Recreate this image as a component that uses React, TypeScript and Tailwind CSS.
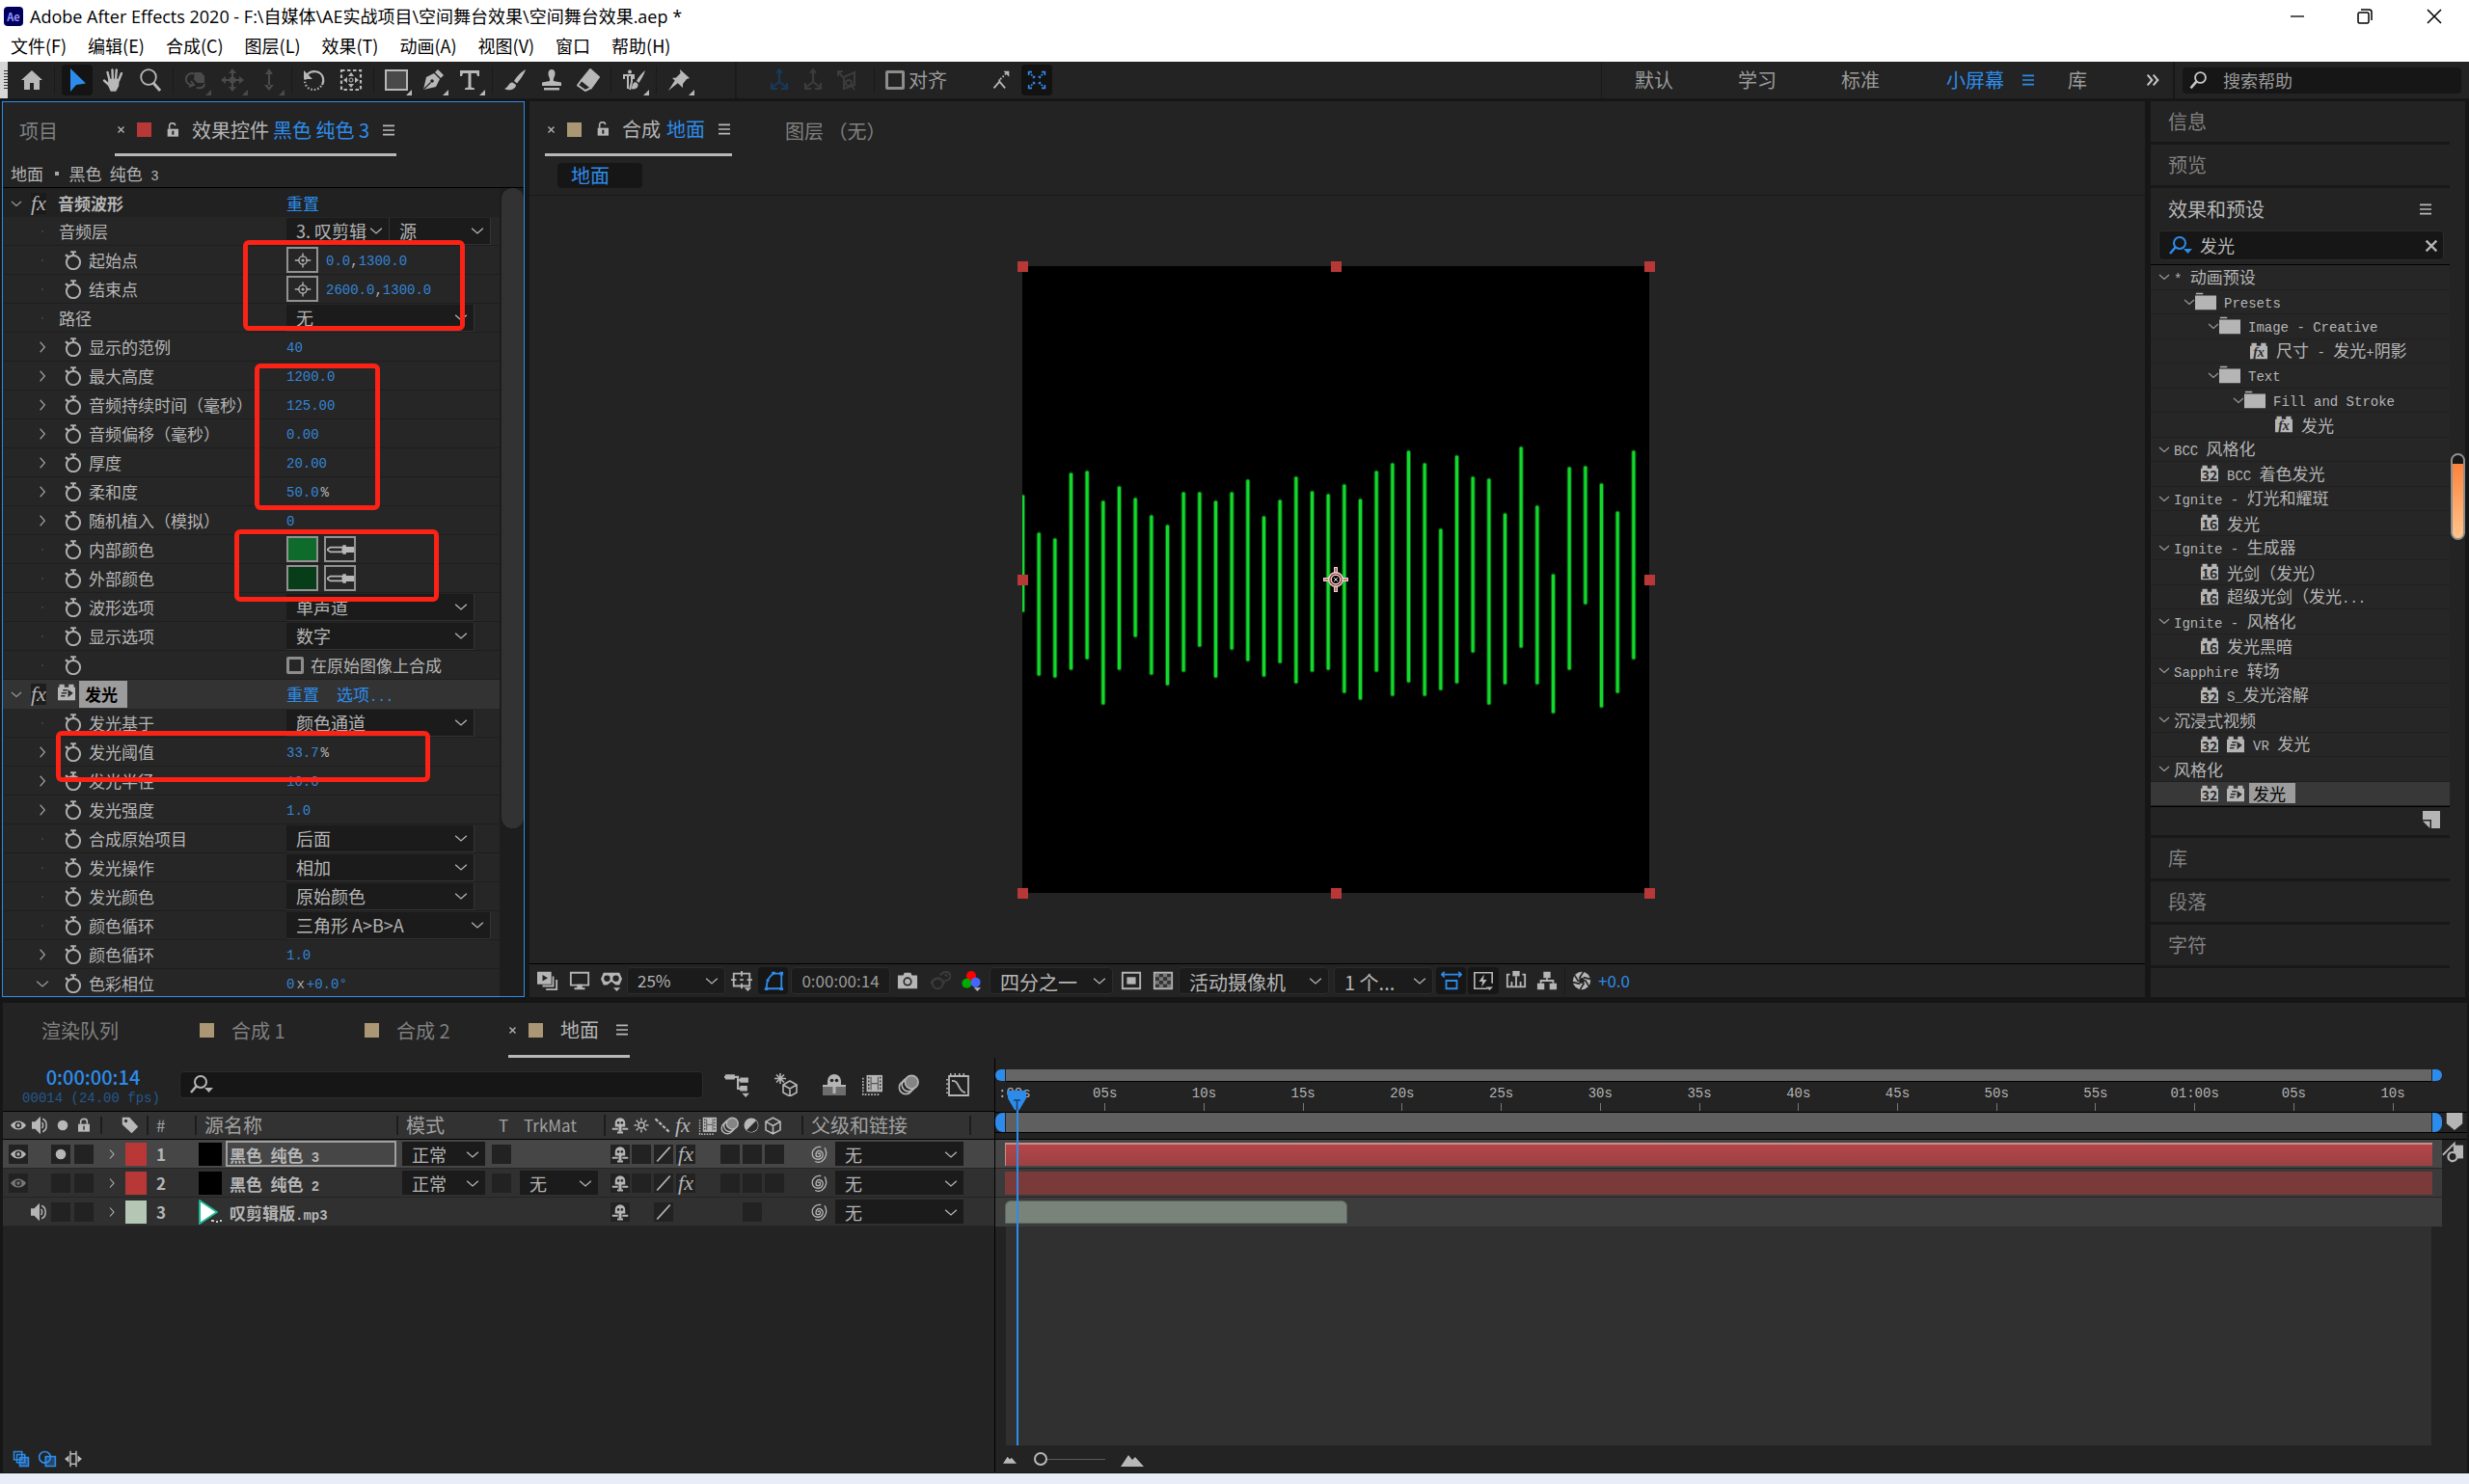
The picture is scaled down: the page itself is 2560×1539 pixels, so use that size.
import type { ReactNode } from 'react';
import clsx from 'clsx';

const icons: Record<string, ReactNode> = {
  home: <path fill="currentColor" d="M12 2 1 12h3v10h6v-7h4v7h6V12h3z" />,
  arrow: <path fill="currentColor" d="M5 0v24l6-7L21 15.500z" />,
  hand: (
    <g fill="none" stroke="currentColor" strokeWidth="2.400" strokeLinecap="round">
      <path d="M7.500 12 5.500 4M10.800 11 10.500 1.500M14 11l.8-9.500M17 12.500 20 5M7 17l-5-4.500" />
      <path fill="currentColor" d="M7.500 12h9l-.5 6-2.500 4.500h-4L7 17z" />
    </g>
  ),
  zoom: (
    <g fill="none" stroke="currentColor" strokeWidth="1.800">
      <circle cx="10" cy="9" r="7.800" />
      <path strokeWidth="3" d="m15 15 7 8" />
    </g>
  ),
  orbit: (
    <g fill="none" stroke="currentColor" strokeWidth="2">
      <path d="M9 17a6 6 0 1 1 2-11" />
      <path fill="currentColor" d="M12 5h5l3 3v6h-6l-3-3z" />
      <path d="m7 13 3 4-5 2M13 20c5 1 8-1 8-4" />
    </g>
  ),
  move: (
    <g fill="currentColor">
      <path d="M11 4h2v16h-2zM4 11h16v2H4z" />
      <path d="m12 0 4 5H8zM12 24l4-5H8zM0 12l5-4v8zM24 12l-5-4v8z" />
      <circle cx="12" cy="12" r="3.500" />
    </g>
  ),
  dolly: (
    <g fill="currentColor">
      <path d="M11 4h2v15h-2zM12 0l4 6H8zM12 23l5-6H7z" />
    </g>
  ),
  rotate: (
    <g fill="none" stroke="currentColor" strokeWidth="2.200">
      <path d="M4 7c5-6 15-5 17 3 .8 3 0 5-1 7" />
      <path strokeDasharray="1.500 2" d="M19 18c-4 6-13 5-16-1-1-2-1-4-.5-6" />
      <path fill="currentColor" stroke="none" d="M1 2v9h9z" />
    </g>
  ),
  panBehind: (
    <g>
      <rect x="2" y="2" width="20" height="20" fill="none" stroke="currentColor" strokeWidth="2.200" strokeDasharray="3.500 2.500" />
      <path fill="currentColor" d="m12 4 3 4H9zM12 20l3-4H9zM4 12l4-3v6zM20 12l-4-3v6z" />
      <circle cx="12" cy="12" r="2" fill="none" stroke="currentColor" />
    </g>
  ),
  rect: <rect x="1" y="2" width="22" height="20" fill="#494949" stroke="currentColor" strokeWidth="2" />,
  pen: (
    <g fill="currentColor">
      <path d="M2 22 5 9l8-4 6 6-4 8z" />
      <path d="m14 4 3-3 6 6-3 3z" />
      <path stroke="#232323" strokeWidth="1.200" d="m2.500 21.500 7-7" />
      <circle cx="11" cy="13" r="1.800" fill="#232323" />
    </g>
  ),
  type: <path fill="currentColor" d="M2 2h20v6h-2l-1-3h-5.500v14.500L17 20.500V22H7v-1.500l3.500-1V5H5L4 8H2z" />,
  brush: (
    <g fill="currentColor">
      <path d="M23 1c-4 2-10 8-12 12l3 2.500C17 12 22 5 23 1z" />
      <path d="M9.500 14.500c-4-.5-4 5-8.500 6.500 5 3 12 .5 12-4z" />
    </g>
  ),
  stamp: (
    <g fill="currentColor">
      <path d="M8.500 5.500a3.500 4.500 0 0 1 7 0c0 3-2 4-1.500 7.500L22 14.500V18H2v-3.500L10 13c.5-3.500-1.500-4.500-1.500-7.500z" />
      <path d="M4 20h16v2.500H4z" />
    </g>
  ),
  eraser: (
    <g fill="none" stroke="currentColor" strokeWidth="2">
      <path fill="currentColor" d="M14 1 23 9 15 20 5 12z" />
      <path d="m5 12-4 5.500L9 23l6-3" />
    </g>
  ),
  roto: (
    <g fill="none" stroke="currentColor" strokeWidth="2">
      <circle cx="8" cy="3.500" r="2" fill="currentColor" stroke="none" />
      <path d="M2 11V7h10v4M6 8v13M10 8v6l-2 8" />
      <path fill="currentColor" stroke="none" d="M24 2c-4 3-7 7-9 11l2.500 2C20 11 23 6 24 2zM14 14c-4 1-3 5-5 7 5 1.500 8-1 7.500-5z" />
    </g>
  ),
  pin: (
    <g fill="currentColor">
      <path d="m13 1 10 9-3 1-4 5 0 4L5 10l4-.5L13.500 5z" />
      <path d="M8 12 1 23l10-8z" />
    </g>
  ),
  axis: (
    <g fill="none" stroke="currentColor" strokeWidth="2">
      <path d="M12 14V3M12 14l-8 6M12 14l8 6M9 5l3-4 3 4M4 15v6h6M20 15v6h-6" />
    </g>
  ),
  axisBox: (
    <g fill="none" stroke="currentColor" strokeWidth="2">
      <path d="M3 3l5 6M3 8V3h5M20 4v13L9 21V9z" />
      <circle cx="14" cy="15" r="3" />
      <path d="m16 17 4 5" />
    </g>
  ),
  snap: (
    <g fill="none" stroke="currentColor" strokeWidth="2.200">
      <path d="m3 22 7-8 7 8M10 14v-3" />
      <path strokeDasharray="2 2" d="m11 11 7-7" />
      <path fill="currentColor" stroke="none" d="M15 1h7v7z" />
    </g>
  ),
  snapBox: (
    <g fill="none" stroke="currentColor" strokeWidth="2">
      <path d="M2 6V2h4M18 2h4v4M22 18v4h-4M6 22H2v-4" />
      <path d="M8 10V8h2M14 8h2v2M16 14v2h-2M10 16H8v-2M5 5l1.500 1.500M19 5l-1.500 1.500M5 19l1.500-1.500M19 19l-1.500-1.500" />
    </g>
  ),
  menu: <path stroke="currentColor" strokeWidth="2.400" d="M3 5h18M3 12h18M3 19h18" />,
  more: <path fill="none" stroke="currentColor" strokeWidth="3" d="m4 4 7 8-7 8M13 4l7 8-7 8" />,
  search: (
    <g fill="none" stroke="currentColor" strokeWidth="2.200">
      <circle cx="15" cy="9" r="6.500" />
      <path strokeWidth="3" d="m10 14-7 8" />
    </g>
  ),
  searchDrop: (
    <g fill="none" stroke="currentColor" strokeWidth="2">
      <circle cx="11" cy="9" r="6" />
      <path strokeWidth="2.500" d="m7 13-6 7" />
      <path fill="currentColor" stroke="none" d="M15 15h9l-4.500 5z" />
    </g>
  ),
  lock: (
    <g fill="currentColor">
      <path d="M3 10h18v12H3z" />
      <path fill="none" stroke="currentColor" strokeWidth="2.400" d="M7 10V6a5 4 0 0 1 10 0v4" />
      <path fill="#232323" d="M11 13h2v6h-2z" />
    </g>
  ),
  unlock: (
    <g fill="currentColor">
      <path d="M4 10h17v12H4z" />
      <path fill="none" stroke="currentColor" strokeWidth="2.400" d="M7 10V5a4.500 4 0 0 1 9 0" />
      <path fill="#232323" d="M11 13h3v6h-3z" />
    </g>
  ),
  close: <path stroke="currentColor" strokeWidth="3.500" d="m4 4 16 16M20 4 4 20" />,
  right: <path fill="none" stroke="currentColor" strokeWidth="2.200" d="m8 3 8 9-8 9" />,
  down: <path fill="none" stroke="currentColor" strokeWidth="2.200" d="m2 8 10 9 10-9" />,
  watch: (
    <g fill="none" stroke="currentColor" strokeWidth="2.400">
      <circle cx="12" cy="14.500" r="8.500" />
      <path d="M8.500 1.500h7M12 2v4" />
      <path strokeWidth="3" d="m2.500 5 3.500 3" />
    </g>
  ),
  target: (
    <g fill="none" stroke="currentColor" strokeWidth="1.800">
      <circle cx="12" cy="12" r="5.500" />
      <circle cx="12" cy="12" r="1.200" fill="currentColor" />
      <path d="M12 2v5M12 17v5M1 12h6M17 12h6" />
    </g>
  ),
  dropper: (
    <g fill="none" stroke="currentColor" strokeWidth="1.400">
      <path d="m0 12 3-2h11v4H3z" />
      <path fill="currentColor" stroke="none" d="M14 8h3v1.500h7v5h-7V16h-3z" />
    </g>
  ),
  brickLines: (
    <g>
      <path fill="currentColor" d="M0 5h2V1h7v4h6V1h7v4h2v18H0z" />
      <path stroke="#2b2b2b" strokeWidth="2" d="M7 9h6M5 13h7M4 17h6" />
      <path fill="#2b2b2b" d="m14 8 7 5-7 6z" />
    </g>
  ),
  brick: <path fill="currentColor" d="M0 5h2V1h7v4h6V1h7v4h2v18H0z" />,
  folder: <path fill="currentColor" d="M1 2h8v1.500H1zM0 5h24v16H0z" />,
  eye: (
    <g>
      <path fill="currentColor" d="M0 12C6 3 18 3 24 12 18 21 6 21 0 12z" />
      <circle cx="12" cy="12" r="5" fill="#2b2b2b" />
      <circle cx="12" cy="12" r="2.500" fill="currentColor" />
    </g>
  ),
  speaker: (
    <g fill="none" stroke="currentColor" strokeWidth="2">
      <path fill="currentColor" d="M1 8h4l6-6v20l-6-6H1z" />
      <path d="M14 8c2 2 2 6 0 8M15 3c7 3 7 15 0 18" />
    </g>
  ),
  dot: <circle cx="12" cy="12" r="8" fill="currentColor" />,
  tag: (
    <g>
      <path fill="currentColor" d="M1 1h10l12 13-9 9L1 11z" />
      <circle cx="6" cy="6" r="2.200" fill="#303030" />
    </g>
  ),
  shy: (
    <g>
      <path fill="currentColor" d="M5 9a7 7.500 0 0 1 14 0v5h-5v7h-4v-7H5z" />
      <path stroke="currentColor" strokeWidth="2.400" d="M1 17h8M15 17h8M8 22h8" />
      <circle cx="9.500" cy="8.500" r="1.800" fill="#2b2b2b" />
      <circle cx="14.500" cy="8.500" r="1.800" fill="#2b2b2b" />
    </g>
  ),
  shyBar: (
    <g>
      <path fill="#6d6d6d" d="M0 14h24v9H0z" />
      <path fill="currentColor" d="M5 8a7 7 0 0 1 14 0v4h5v2H13.500v7h-3v-7H0v-2h5z" />
      <circle cx="9.500" cy="7.500" r="1.800" fill="#232323" />
      <circle cx="14.500" cy="7.500" r="1.800" fill="#232323" />
    </g>
  ),
  sun: (
    <g fill="none" stroke="currentColor" strokeWidth="2">
      <circle cx="12" cy="12" r="4" />
      <path d="M12 2v4M12 18v4M2 12h4M18 12h4M5 5l3 3M16 16l3 3M19 5l-3 3M8 16l-3 3" />
    </g>
  ),
  slashDots: <path stroke="currentColor" strokeWidth="3" strokeDasharray="5 2" d="m2 3 19 18" />,
  slash: <path stroke="currentColor" strokeWidth="2.400" d="M3 22 21 2" />,
  film: (
    <g>
      <path fill="currentColor" d="M6 1h18v19H6z" />
      <path fill="none" stroke="currentColor" strokeWidth="1.800" strokeDasharray="2 1.500" d="M2 4v19h18" />
      <path stroke="#2b2b2b" strokeWidth="1.500" strokeDasharray="2 2" d="M8.500 3v16M21.500 3v16" />
      <path fill="none" stroke="#555" strokeWidth="1.200" d="M11 3v15M19 3v15M11 10.500h8" />
    </g>
  ),
  blur: (
    <g fill="none" stroke="currentColor" strokeWidth="1.800">
      <circle cx="9" cy="15" r="7.500" />
      <circle cx="12" cy="12" r="7.500" />
      <circle cx="15.500" cy="9" r="7.500" fill="#858585" />
    </g>
  ),
  adjust: (
    <g>
      <circle cx="12" cy="12" r="10" fill="currentColor" />
      <path fill="#2b2b2b" d="M18.500 5.500A9 9 0 0 1 5.500 18.500z" />
    </g>
  ),
  cube: <path fill="none" stroke="currentColor" strokeWidth="2" d="m12 1.500 9.500 5v11L12 22.500l-9.500-5v-11zM2.500 6.500 12 12l9.500-5.500M12 12v10" />,
  whip: (
    <g fill="none" stroke="currentColor" strokeWidth="1.800">
      <path d="M11 12c0-2 3-2 3 .5 0 4-6 4-6 0C8 8 12 6 15 8c5 4 2 11-4 11C2 19 0 8 8 3c2-1 5-1.500 7-1" />
      <path d="M20 3c4 7 2 14-4 19-3 1.500-6 1.500-9 0" />
    </g>
  ),
  flow: (
    <g fill="none" stroke="currentColor" strokeWidth="2">
      <path fill="currentColor" d="M2 3h7v3H2zM16 6h6v3h-6zM16 14h5v3h-5z" />
      <path d="M0 4.500h13v11h4M13 7.500h3" />
      <path fill="currentColor" stroke="none" d="M17 20h7l-3.500 4z" />
    </g>
  ),
  draft3d: (
    <g fill="none" stroke="currentColor" strokeWidth="1.600">
      <path d="M6 0v11M0 5.500h12M2 1.500l8 8M10 1.500l-8 8" />
      <path d="m16 8 7 4v8l-7 4-7-4v-8zM9 12l7 4 7-4M16 16v8" />
    </g>
  ),
  graph: (
    <g fill="none" stroke="currentColor" strokeWidth="1.800">
      <path d="M3 3h20v20H3zM6 8c8-1 6 11 14 12" />
      <path strokeDasharray="1.500 3" d="M4 1h18M1 6v16" />
    </g>
  ),
  preview: (
    <g fill="none" stroke="currentColor" strokeWidth="2">
      <path fill="currentColor" d="M1 3h14v12H1z" />
      <path d="M18 7v11H6M22 11v11H10" />
      <path fill="#232323" stroke="none" d="m6 5.500 6 3.500-6 3.500z" />
    </g>
  ),
  monitor: (
    <g fill="none" stroke="currentColor" strokeWidth="2">
      <path d="M2 3h20v14H2z" />
      <path fill="currentColor" d="M10 17h4v4h-4zM6 21h12" />
    </g>
  ),
  goggles: (
    <g>
      <path fill="currentColor" d="M3 3h18l3 7-3 7h-4l-5-4-5 4H3l-3-7z" />
      <circle cx="7" cy="9.500" r="3.500" fill="#232323" />
      <circle cx="17" cy="9.500" r="3.500" fill="#232323" />
      <path fill="currentColor" d="M14 20h8l-4 4z" />
    </g>
  ),
  safe: (
    <g fill="none" stroke="currentColor" strokeWidth="2">
      <path d="M3 4h18v14H3zM12 1v6M12 15v6M0 11h6M18 11h6M10 11h4" />
      <path fill="currentColor" stroke="none" d="M15 20h8l-4 4z" />
    </g>
  ),
  mask: (
    <g fill="none" stroke="currentColor" strokeWidth="2">
      <path d="M4 21h17V4h-9C7 7 4 13 4 21z" />
      <path fill="currentColor" d="M2 20h4v3H2zM19 20h4v3h-4zM19 2h4v4h-4zM10 2h4v3h-4zM4 10h3v3H4z" stroke="none" />
    </g>
  ),
  camera: (
    <g>
      <path fill="currentColor" d="M1 6h6l1.500-3h7L17 6h6v15H1z" />
      <circle cx="12" cy="13" r="5" fill="#232323" />
      <circle cx="12" cy="13" r="3.200" fill="currentColor" />
    </g>
  ),
  ghost: (
    <g fill="none" stroke="currentColor" strokeWidth="2.200">
      <circle cx="9" cy="15" r="6" />
      <path d="M1 15c5-7 11-7 16 0M12 6c3-5 9-5 11-1s-2 7-6 7M17 5l3 2" />
    </g>
  ),
  rgb: (
    <g>
      <circle cx="12" cy="6.500" r="5.500" fill="#f00" />
      <circle cx="7" cy="15" r="5.500" fill="#0a0" />
      <circle cx="17" cy="14" r="5.500" fill="#46f" />
      <path fill="#b5b5b5" d="M15 20h8l-4 4z" />
    </g>
  ),
  region: (
    <g>
      <path fill="none" stroke="currentColor" strokeWidth="2" d="M2 3h20v18H2z" />
      <path fill="currentColor" d="M7 8h10v8H7z" />
    </g>
  ),
  checker: (
    <g>
      <path fill="#333" stroke="currentColor" strokeWidth="2" d="M2 3h20v18H2z" />
      <path fill="#7a7a7a" d="M3 4h4.500v4H3zM12 4h4.500v4H12zM7.500 8H12v4H7.500zM16.500 8H21v4h-4.500zM3 12h4.500v4H3zM12 12h4.500v4H12zM7.500 16H12v4H7.500zM16.500 16H21v4h-4.500z" />
    </g>
  ),
  pixelAspect: (
    <g fill="none" stroke="currentColor" strokeWidth="2">
      <path d="M6 12h12v9H6zM1 5h22M4 2 1 5l3 3M20 2l3 3-3 3" />
    </g>
  ),
  fast: (
    <g fill="none" stroke="currentColor" strokeWidth="1.800">
      <path d="M17 21H2V3h20v12" />
      <path fill="currentColor" stroke="none" d="m13 5-6 8h4l-1 6 6-8h-4zM15 19h8l-4 4z" />
    </g>
  ),
  timelineIcon: (
    <g fill="none" stroke="currentColor" strokeWidth="2">
      <path d="M5 5H2v14h20V5h-3M7 13v5M12 7v11M17 13v5" />
      <path fill="currentColor" stroke="none" d="M8 1h8v6H8z" />
    </g>
  ),
  flowchart: (
    <g fill="currentColor">
      <path d="M8 2h8v7H8zM1 15h8v7H1zM15 15h8v7h-8z" />
      <path fill="none" stroke="currentColor" strokeWidth="2" d="M12 9v3M5 15v-3h14v3" />
    </g>
  ),
  aperture: (
    <g>
      <circle cx="12" cy="12" r="11" fill="currentColor" />
      <path fill="none" stroke="#232323" strokeWidth="2" d="M14 1 9 9M23 10l-9-2M21 19l-5-8M10 23l5-8M1 14l9 2M3 5l5 8" />
      <circle cx="12" cy="12" r="3.500" fill="#232323" />
    </g>
  ),
  newBin: (
    <g>
      <path fill="currentColor" d="M0 0h24v24H12V12H0z" />
      <path fill="currentColor" d="M0 14h10v10z" />
    </g>
  ),
  switches: (
    <g fill="none" stroke="currentColor" strokeWidth="2">
      <path d="M2 2h11v11H2zM6 6h11v11H6z" />
      <path fill="currentColor" fillOpacity=".5" d="M10 10h12v12H10z" />
    </g>
  ),
  modes: (
    <g fill="none" stroke="currentColor" strokeWidth="2">
      <circle cx="9" cy="10" r="7" />
      <path fill="currentColor" fillOpacity=".35" d="M10 9h12v12H10z" />
    </g>
  ),
  stretch: (
    <g fill="none" stroke="currentColor" strokeWidth="2">
      <path d="M8 1v22M16 1v22M8 5h8M8 19h8" />
      <path fill="currentColor" stroke="none" d="m0 12 6-5v10zM24 12l-6-5v10z" />
    </g>
  ),
  mountain: <path fill="currentColor" d="m0 20 8-12 4 5 3-3 9 10z" />,
  shield: <path fill="currentColor" d="M1 0h22v15l-11 9L1 15z" />,
  compButton: (
    <g>
      <path fill="currentColor" d="M13 4h11v15H13z" />
      <path fill="none" stroke="currentColor" strokeWidth="2" d="M1 15 14 2v10" />
      <circle cx="12" cy="17" r="5" fill="#232323" stroke="currentColor" strokeWidth="2.400" />
    </g>
  ),
};

function Icon({ name, className = 'size-6' }: { name: string; className?: string }) {
  return (
    <svg viewBox="0 0 24 24" className={clsx('shrink-0', className)} aria-hidden="true">
      {icons[name]}
    </svg>
  );
}

// Latin runs are set in the narrow monospaced face, Chinese runs in the wider one
function Mixed({ text }: { text: string }) {
  const runs = text.match(/[\x20-\x7e°]+|[^\x20-\x7e°]+/g) ?? [];
  return (
    <span className="whitespace-pre">
      {runs.map((run, i) =>
        /^[\x20-\x7e°]/.test(run) ? (
          <span key={i} className="font-['Liberation_Mono',monospace] text-[14px]">{run}</span>
        ) : (
          <span key={i} className="text-[17px]">{run}</span>
        ),
      )}
    </span>
  );
}

function Select({ label, value, className }: { label: string; value: string; className?: string }) {
  return (
    <span className={clsx('relative flex shrink-0 items-center bg-[#1b1b1b]', className)}>
      <select aria-label={label} className="h-full w-full appearance-none bg-transparent pl-2.5 outline-none">
        <option>{value}</option>
      </select>
      <Icon name="down" className="pointer-events-none absolute right-1.5 size-3.5" />
    </span>
  );
}

function Fx({ className }: { className?: string }) {
  return <span className={clsx("font-['Liberation_Serif',serif] text-[22px] leading-none italic", className)}>fx</span>;
}

function TabMenu() {
  return (
    <button aria-label="面板菜单" className="text-[#b8b8b8]">
      <Icon name="menu" className="size-4" />
    </button>
  );
}

const menus = ['文件(F)', '编辑(E)', '合成(C)', '图层(L)', '效果(T)', '动画(A)', '视图(V)', '窗口', '帮助(H)'];

function TitleBar() {
  return (
    <header className="flex h-16 flex-col bg-white text-black">
      <div className="flex h-[34px] items-center pl-1">
        <span className="flex size-5 items-center justify-center rounded-sm bg-[#00005b] text-[11px] font-bold text-[#9999ff]">Ae</span>
        <h1 className="ml-[7px] font-['Open_Sans','Noto_Sans_CJK_SC',sans-serif] text-[18px]">
          Adobe After Effects 2020 - F:\自媒体\AE实战项目\空间舞台效果\空间舞台效果.aep *
        </h1>
        <div className="ml-auto flex">
          <button aria-label="最小化" className="flex h-8 w-[70px] items-center justify-center">
            <svg viewBox="0 0 16 16" className="size-4"><path stroke="#000" strokeWidth="1.300" d="M1 8h14" /></svg>
          </button>
          <button aria-label="还原" className="flex h-8 w-[70px] items-center justify-center">
            <svg viewBox="0 0 16 16" className="size-4" fill="none" stroke="#000" strokeWidth="1.500">
              <rect x="1" y="4" width="11" height="11" rx="1.500" />
              <path d="M4 1h8.500q2.500 0 2.500 2.500V12" />
            </svg>
          </button>
          <button aria-label="关闭" className="flex h-8 w-[73px] items-center justify-center">
            <svg viewBox="0 0 16 16" className="size-4"><path stroke="#000" strokeWidth="1.500" d="m1 1 14 14M15 1 1 15" /></svg>
          </button>
        </div>
      </div>
      <nav className="flex h-[30px] items-start gap-[22px] pl-[11px] text-[18px]">
        {menus.map((m) => <button key={m}>{m}</button>)}
      </nav>
    </header>
  );
}

type ToolDef = { icon: string; more?: boolean; state?: 'active' | 'off' };

const toolGroups: ToolDef[][] = [
  [{ icon: 'home' }],
  [{ icon: 'arrow', state: 'active' }, { icon: 'hand' }, { icon: 'zoom' }],
  [{ icon: 'orbit', state: 'off', more: true }, { icon: 'move', state: 'off', more: true }, { icon: 'dolly', state: 'off', more: true }],
  [{ icon: 'rotate' }, { icon: 'panBehind' }],
  [{ icon: 'rect', more: true }, { icon: 'pen', more: true }, { icon: 'type', more: true }],
  [{ icon: 'brush' }, { icon: 'stamp' }, { icon: 'eraser' }],
  [{ icon: 'roto', more: true }],
  [{ icon: 'pin', more: true }],
];

function Tool({ icon, more, state }: ToolDef) {
  return (
    <button
      aria-label={icon}
      className={clsx('relative mx-[3px] flex h-8 w-8 items-center justify-center rounded-sm', {
        'bg-[#141414] text-[#2d8ceb]': state === 'active',
        'text-[#4a4a4a]': state === 'off',
      })}
    >
      <Icon name={icon} />
      {more && (
        <svg viewBox="0 0 6 6" className="absolute right-0 bottom-0 size-1.5"><path fill="currentColor" d="M6 0v6H0z" /></svg>
      )}
    </button>
  );
}

function Toolbar() {
  return (
    <div className="flex h-[38px] items-center bg-[#232323] text-[#b8b8b8]">
      <span className="mr-1.5 flex h-full w-2 items-center justify-end bg-[#d6d6d6]">
        <svg viewBox="0 0 4 20" className="h-5 w-1"><path stroke="#333" strokeWidth="4" strokeDasharray="1 2" d="M2 0v20" /></svg>
      </span>
      {toolGroups.map((group, i) => (
        <div key={i} className="flex items-center">
          {i > 0 && <span className="mx-1 h-7 w-px bg-[#1a1a1a]" />}
          {group.map((t) => <Tool key={t.icon} {...t} />)}
        </div>
      ))}
      <span className="ml-[39px] h-full w-0.5 bg-[#1a1a1a]" />
      <div className="ml-[26px] flex text-[#3c3c3c]">
        <button aria-label="本地轴" className="flex w-[35px] justify-center text-[#173a5c]"><Icon name="axis" /></button>
        <button aria-label="世界轴" className="flex w-[35px] justify-center"><Icon name="axis" /></button>
        <button aria-label="视图轴" className="flex w-[35px] justify-center"><Icon name="axisBox" /></button>
      </div>
      <span className="mx-[11px] h-7 w-px bg-[#1a1a1a]" />
      <label className="flex items-center gap-1 text-[20px] text-[#9b9b9b]">
        <input type="checkbox" className="size-5 appearance-none rounded-xs border-[3px] border-[#8c8c8c]" />
        对齐
      </label>
      <button aria-label="对齐边缘" className="ml-10 flex w-8 justify-center"><Icon name="snap" className="size-5" /></button>
      <button aria-label="对齐特征" className="ml-[5px] flex h-8 w-8 items-center justify-center rounded-sm bg-[#121212] text-[#2d8ceb]">
        <Icon name="snapBox" className="size-5" />
      </button>

      <div className="ml-auto flex h-full items-center text-[20px] text-[#9b9b9b]">
        <span className="mr-[34px] h-full w-px bg-[#181818]" />
        <button>默认</button>
        <button className="ml-[67px]">学习</button>
        <button className="ml-[67px]">标准</button>
        <button className="ml-[69px] text-[#2d8ceb]">小屏幕</button>
        <button aria-label="工作区菜单" className="ml-[17px] text-[#2d8ceb]"><Icon name="menu" className="size-4" /></button>
        <button className="ml-[33px]">库</button>
        <button aria-label="更多工作区" className="ml-[60px] text-[#c8c8c8]"><Icon name="more" className="size-4" /></button>
        <span className="mr-2 ml-[13px] h-full w-0.5 bg-[#181818]" />
        <label className="mr-2 flex h-[27px] w-[289px] items-center rounded-sm bg-[#161616]">
          <Icon name="search" className="ml-1.5 size-5 text-[#c8c8c8]" />
          <input aria-label="搜索帮助" placeholder="搜索帮助" className="ml-4 w-full bg-transparent text-[18px] outline-none placeholder:text-[#9b9b9b]" />
        </label>
      </div>
    </div>
  );
}

type Prop = {
  label: string;
  open?: 'right' | 'down';
  plain?: boolean;
  value?: string;
  unit?: string;
  select?: string;
  wide?: boolean;
  point?: [string, string];
  color?: string;
  check?: string;
  source?: boolean;
  angle?: boolean;
};

const waveform: Prop[] = [
  { label: '音频层', plain: true, select: '3. 叹剪辑', source: true },
  { label: '起始点', point: ['0.0', '1300.0'] },
  { label: '结束点', point: ['2600.0', '1300.0'] },
  { label: '路径', plain: true, select: '无' },
  { label: '显示的范例', open: 'right', value: '40' },
  { label: '最大高度', open: 'right', value: '1200.0' },
  { label: '音频持续时间（毫秒）', open: 'right', value: '125.00' },
  { label: '音频偏移（毫秒）', open: 'right', value: '0.00' },
  { label: '厚度', open: 'right', value: '20.00' },
  { label: '柔和度', open: 'right', value: '50.0', unit: '%' },
  { label: '随机植入（模拟）', open: 'right', value: '0' },
  { label: '内部颜色', color: 'bg-[#0f6b2b]' },
  { label: '外部颜色', color: 'bg-[#073d18]' },
  { label: '波形选项', select: '单声道' },
  { label: '显示选项', select: '数字' },
  { label: '', check: '在原始图像上合成' },
];

const glow: Prop[] = [
  { label: '发光基于', select: '颜色通道' },
  { label: '发光阈值', open: 'right', value: '33.7', unit: '%' },
  { label: '发光半径', open: 'right', value: '10.0' },
  { label: '发光强度', open: 'right', value: '1.0' },
  { label: '合成原始项目', select: '后面' },
  { label: '发光操作', select: '相加' },
  { label: '发光颜色', select: '原始颜色' },
  { label: '颜色循环', select: '三角形 A>B>A', wide: true },
  { label: '颜色循环', open: 'right', value: '1.0' },
  { label: '色彩相位', open: 'down', angle: true },
];

const numeric = "pt-1 font-['Liberation_Mono',monospace] text-[14px]";

function PropRow({ p }: { p: Prop }) {
  return (
    <div className="flex h-[30px] items-center border-b border-[#1e1e1e]">
      <div className="flex w-[294px] shrink-0 items-center pl-[29px]">
        <span className="flex w-6 justify-center text-[#9b9b9b]">
          {p.open ? <Icon name={p.open} className="size-3.5" /> : <span className="size-0.5 bg-[#3d3d3d]" />}
        </span>
        {!p.plain && (
          <button aria-label="时间变化秒表" className="mr-1.5 ml-2.5 text-[#b0b0b0]">
            <Icon name="watch" className="size-5" />
          </button>
        )}
        <span className={clsx('text-[17px] whitespace-nowrap', p.plain && 'ml-[5px]')}>{p.label}</span>
      </div>
      {p.value && (
        <span className={numeric}>
          <button className="text-[#3585d6]">{p.value}</button>
          {p.unit && <span className="ml-0.5">{p.unit}</span>}
        </span>
      )}
      {p.angle && (
        <span className={clsx(numeric, 'text-[#3585d6]')}>
          <button>0</button><span className="mx-0.5 text-[#a8a8a8]">x</span><button>+0.0</button>°
        </span>
      )}
      {p.select && (
        <Select
          label={p.label}
          value={p.select}
          className={clsx('h-7 border-r border-b border-[#333] text-[18px]', p.source ? 'w-[107px]' : p.wide ? 'w-[212px]' : 'w-[195px]')}
        />
      )}
      {p.source && <Select label="音频源" value="源" className="h-7 w-[105px] border-r border-b border-[#333] text-[18px]" />}
      {p.point && (
        <>
          <button aria-label={p.label} className="flex h-[27px] w-[33px] items-center justify-center border-2 border-[#929292]">
            <Icon name="target" className="size-[18px]" />
          </button>
          <span className={clsx('ml-2', numeric)}>
            <button className="text-[#3585d6]">{p.point[0]}</button>,<button className="text-[#3585d6]">{p.point[1]}</button>
          </span>
        </>
      )}
      {p.color && (
        <>
          <button aria-label={p.label} className={clsx('h-[27px] w-[33px] border-2 border-[#929292]', p.color)} />
          <button aria-label="吸管" className="ml-1.5 flex h-[27px] w-[33px] items-center justify-center border-2 border-[#929292] text-[#b8b8b8]">
            <Icon name="dropper" className="size-7" />
          </button>
        </>
      )}
      {p.check && (
        <label className="flex items-center gap-[7px] text-[17px]">
          <input type="checkbox" className="size-[18px] appearance-none rounded-xs border-[3px] border-[#8c8c8c]" />
          {p.check}
        </label>
      )}
    </div>
  );
}

function EffectControls() {
  return (
    <section className="relative ml-0.5 flex w-[542px] shrink-0 flex-col border border-[#2d8ceb] bg-[#232323]">
      <div className="flex h-14 text-[20px]">
        <button className="pt-1 pl-[17px] text-[#808080]">项目</button>
        <div className="ml-[59px] flex items-center border-b-[3px] border-[#b8b8b8] pt-1">
          <button aria-label="关闭面板" className="ml-0.5"><Icon name="close" className="size-[9px]" /></button>
          <span className="ml-3 size-[15px] bg-[#b83838]" />
          <Icon name="unlock" className="mr-3 ml-3.5 size-4" />
          <span className="mr-1">效果控件</span>
          <span className="mr-3 text-[#2d8ceb]">黑色 纯色 3</span>
          <TabMenu />
        </div>
      </div>
      <div className="flex h-[33px] items-center border-b border-black pt-1 pl-2">
        <Mixed text="地面 " /><span className="mr-2.5 ml-1 size-1 bg-[#a8a8a8]" /><Mixed text="黑色 纯色 3" />
      </div>
      <div className="flex">
        <div className="flex-1 bg-[#262626]">
          <div className="flex h-[30px] items-center bg-[#212121] pt-0.5">
            <span className="flex w-[294px] items-center">
              <Icon name="down" className="ml-2 size-3 text-[#9b9b9b]" />
              <Fx className="mr-3 ml-[9px] bg-[#1a1a1a]" />
              <span className="text-[17px] font-bold">音频波形</span>
            </span>
            <button className="text-[17px] text-[#2d8ceb]">重置</button>
          </div>
          {waveform.map((p, i) => <PropRow key={i} p={p} />)}
          <div className="flex h-[30px] items-center bg-[#333]">
            <span className="flex w-[294px] items-center">
              <Icon name="down" className="ml-2 size-3 text-[#9b9b9b]" />
              <Fx className="mr-3 ml-[9px] bg-[#1d1d1d]" />
              <Icon name="brickLines" className="mr-1 mb-1 size-[18px]" />
              <span className="bg-[#9c9c9c] pr-2.5 pl-1.5 text-[17px] leading-7 font-bold text-black">发光</span>
            </span>
            <button className="text-[17px] text-[#2d8ceb]">重置</button>
            <button className="ml-[18px] text-[17px] text-[#2d8ceb]"><Mixed text="选项..." /></button>
          </div>
          <div className="-mb-0.5">{glow.map((p, i) => <PropRow key={i} p={p} />)}</div>
        </div>
        <div className="w-[25px] bg-[#1d1d1d] pl-0.5">
          <div className="h-[664px] rounded-full bg-[#323232]" />
        </div>
      </div>
      <div className="pointer-events-none absolute top-[143px] left-[249px] h-[94px] w-[230px] rounded-md border-[5px] border-[#fb2216]" />
      <div className="pointer-events-none absolute top-[271px] left-[261px] h-[152px] w-[130px] rounded-md border-[5px] border-[#fb2216]" />
      <div className="pointer-events-none absolute top-[443px] left-[240px] h-[75px] w-[212px] rounded-md border-[5px] border-[#fb2216]" />
      <div className="pointer-events-none absolute top-[652px] left-[55px] h-[53px] w-[388px] rounded-md border-[5px] border-[#fb2216]" />
    </section>
  );
}

// top and bottom of each audio sample, in canvas units
const samples = [
  [237, 359], [276, 425], [282, 427], [214, 419], [212, 408], [243, 455], [228, 419], [240, 385], [258, 424], [268, 435],
  [234, 421], [234, 395], [243, 427], [234, 398], [221, 410], [259, 426], [242, 412], [218, 433], [233, 421], [236, 419],
  [226, 443], [241, 450], [212, 421], [204, 446], [191, 432], [204, 446], [272, 440], [196, 433], [218, 401], [220, 455],
  [256, 434], [187, 396], [248, 434], [319, 464], [208, 419], [207, 351], [225, 458], [254, 443], [191, 408],
];

function Canvas() {
  const handles = [[0, 0], [325, 0], [650, 0], [0, 325], [650, 325], [0, 650], [325, 650], [650, 650]];
  return (
    <svg viewBox="-6 -6 662 662" className="size-[662px]">
      <rect width="650" height="650" fill="#000" />
      <clipPath id="frame"><rect width="650" height="650" /></clipPath>
      <g clipPath="url(#frame)">
        {samples.map(([top, bottom], i) => (
          <g key={i} strokeLinecap="round">
            <path d={`M${(i * 650) / 39 + 0.5} ${top + 2}V${bottom - 2}`} stroke="#075c12" strokeWidth="5" />
            <path d={`M${(i * 650) / 39 + 0.5} ${top + 2}V${bottom - 2}`} stroke="#12d92c" strokeWidth="3" />
          </g>
        ))}
      </g>
      {handles.map(([x, y]) => <rect key={`${x}-${y}`} x={x - 5} y={y - 5} width="11" height="11" fill="#b83838" />)}
      <g fill="none" transform="translate(325 325)">
        <path stroke="#f0d0d0" strokeWidth="4" d="M0-13v7M0 6v7M-13 0h7M6 0h7" />
        <path stroke="#8c3a3a" strokeWidth="1.200" d="M0-12v6M0 6v6M-12 0h6M6 0h6" />
        <circle r="6" stroke="#f0d0d0" strokeWidth="4" />
        <circle r="6" stroke="#8c3a3a" strokeWidth="1.200" />
        <path stroke="#ddd" d="M-2-2l4 4M2-2l-4 4" />
      </g>
    </svg>
  );
}

function ViewerButton({ icon, className, size }: { icon: string; className?: string; size?: string }) {
  return (
    <button aria-label={icon} className={clsx('flex h-7 shrink-0 items-center justify-center', className)}>
      <Icon name={icon} className={size ?? 'size-[22px]'} />
    </button>
  );
}

function Viewer() {
  return (
    <section className="flex flex-1 flex-col bg-[#232323]">
      <div className="flex h-[57px] items-stretch pl-4 text-[20px]">
        <div className="flex items-center border-b-[3px] border-[#b8b8b8] pt-1">
          <button aria-label="关闭面板" className="ml-0.5"><Icon name="close" className="size-[9px]" /></button>
          <span className="ml-3 size-[15px] bg-[#ab9774]" />
          <Icon name="unlock" className="mr-3 ml-3.5 size-4" />
          <span className="mr-1.5">合成</span>
          <span className="mr-3 text-[#2d8ceb]">地面</span>
          <TabMenu />
        </div>
        <button className="ml-[55px] pt-1 text-[#808080]">图层 （无）</button>
      </div>
      <div className="flex h-[41px] items-start border-b border-[#191919] pt-[7px] pl-[29px]">
        <button className="h-[26px] w-[88px] rounded-sm bg-[#161616] pl-3.5 text-left text-[20px] leading-[26px] text-[#2d8ceb]">地面</button>
      </div>
      <div className="flex flex-1 items-center justify-center pr-1"><Canvas /></div>
      <div className="flex h-[35px] items-center border-t border-black pl-0.5 text-[20px]">
        <ViewerButton icon="preview" className="w-[33px]" />
        <ViewerButton icon="monitor" className="w-[33px]" />
        <ViewerButton icon="goggles" className="w-[33px]" />
        <Select label="放大率" value="25%" className="h-7 w-[102px] rounded-sm border border-[#2c2c2c] text-[17px]" />
        <ViewerButton icon="safe" className="w-[34px]" />
        <ViewerButton icon="mask" className="mr-[3px] w-[31px] rounded-sm bg-[#161616] text-[#2d8ceb]" />
        <button className="h-7 w-[103px] rounded-sm border border-[#2c2c2c] bg-[#1b1b1b] text-[17px] leading-6 text-[#9b9b9b]">0:00:00:14</button>
        <ViewerButton icon="camera" className="w-9" />
        <ViewerButton icon="ghost" className="w-8 text-[#3c3c3c]" />
        <ViewerButton icon="rgb" className="mr-[3px] w-8" />
        <Select label="分辨率" value="四分之一" className="mr-0.5 h-7 w-[128px] rounded-sm border border-[#2c2c2c]" />
        <ViewerButton icon="region" className="w-[33px]" />
        <ViewerButton icon="checker" className="w-[33px]" />
        <Select label="3D 视图" value="活动摄像机" className="mr-[5px] h-7 w-[156px] rounded-sm border border-[#2c2c2c]" />
        <Select label="视图布局" value="1 个..." className="mr-[3px] h-7 w-[103px] rounded-sm border border-[#2c2c2c]" />
        <ViewerButton icon="pixelAspect" className="mr-0.5 w-[31px] rounded-sm bg-[#161616] text-[#2d8ceb]" />
        <ViewerButton icon="fast" className="mr-0.5 w-8 rounded-sm bg-[#161616]" />
        <ViewerButton icon="timelineIcon" className="w-8" />
        <ViewerButton icon="flowchart" className="w-8" />
        <span className="ml-0.5 h-7 w-px bg-[#1a1a1a]" />
        <ViewerButton icon="aperture" className="w-[34px]" size="size-5" />
        <button className="text-[17px] text-[#2d8ceb]">+0.0</button>
      </div>
    </section>
  );
}

type Node = { indent: string; text: string; kind: 'group' | 'folder' | 'item'; badges?: string[]; selected?: boolean };

const tree: Node[] = [
  { indent: 'pl-2', text: '* 动画预设', kind: 'group' },
  { indent: 'pl-[34px]', text: 'Presets', kind: 'folder' },
  { indent: 'pl-[59px]', text: 'Image - Creative', kind: 'folder' },
  { indent: 'pl-[103px]', text: '尺寸 - 发光+阴影', kind: 'item', badges: ['fx'] },
  { indent: 'pl-[59px]', text: 'Text', kind: 'folder' },
  { indent: 'pl-[85px]', text: 'Fill and Stroke', kind: 'folder' },
  { indent: 'pl-[129px]', text: '发光', kind: 'item', badges: ['fx'] },
  { indent: 'pl-2', text: 'BCC 风格化', kind: 'group' },
  { indent: 'pl-[52px]', text: 'BCC 着色发光', kind: 'item', badges: ['32'] },
  { indent: 'pl-2', text: 'Ignite - 灯光和耀斑', kind: 'group' },
  { indent: 'pl-[52px]', text: '发光', kind: 'item', badges: ['16'] },
  { indent: 'pl-2', text: 'Ignite - 生成器', kind: 'group' },
  { indent: 'pl-[52px]', text: '光剑（发光）', kind: 'item', badges: ['16'] },
  { indent: 'pl-[52px]', text: '超级光剑（发光...', kind: 'item', badges: ['16'] },
  { indent: 'pl-2', text: 'Ignite - 风格化', kind: 'group' },
  { indent: 'pl-[52px]', text: '发光黑暗', kind: 'item', badges: ['16'] },
  { indent: 'pl-2', text: 'Sapphire 转场', kind: 'group' },
  { indent: 'pl-[52px]', text: 'S_发光溶解', kind: 'item', badges: ['32'] },
  { indent: 'pl-2', text: '沉浸式视频', kind: 'group' },
  { indent: 'pl-[52px]', text: 'VR 发光', kind: 'item', badges: ['32', 'gpu'] },
  { indent: 'pl-2', text: '风格化', kind: 'group' },
  { indent: 'pl-[52px]', text: '发光', kind: 'item', badges: ['32', 'gpu'], selected: true },
];

function Badge({ kind }: { kind: string }) {
  if (kind === 'gpu') return <Icon name="brickLines" className="mr-[9px] size-[18px]" />;
  return (
    <span className="relative mr-[9px] flex size-[18px] items-end justify-center">
      <Icon name="brick" className="absolute inset-0 size-[18px]" />
      <span className={clsx('relative text-[14px] leading-[15px] font-bold text-[#2b2b2b]', kind === 'fx' && "font-['Liberation_Serif',serif] italic")}>{kind}</span>
    </span>
  );
}

function PanelTab({ title }: { title: string }) {
  return (
    <button className="mr-4 block h-[45px] border-b-[3px] border-[#181818] pl-[18px] text-left text-[20px] text-[#808080]">{title}</button>
  );
}

function SidePanels() {
  return (
    <aside className="relative mr-1 ml-1.5 flex w-[326px] shrink-0 flex-col bg-[#232323]">
      <PanelTab title="信息" />
      <PanelTab title="预览" />
      <div className="mr-4 flex h-11 items-center justify-between pr-[17px] pl-[18px] text-[20px]">
        效果和预设
        <TabMenu />
      </div>
      <label className="mr-[22px] mb-1 ml-2 flex h-[31px] items-center rounded-sm border border-[#2c2c2c] bg-[#161616]">
        <Icon name="searchDrop" className="ml-2.5 size-6 text-[#2d8ceb]" />
        <input aria-label="搜索效果" defaultValue="发光" className="ml-2 min-w-0 flex-1 bg-transparent text-[18px] outline-none" />
        <button aria-label="清除" className="mr-1"><Icon name="close" className="size-4" /></button>
      </label>
      <ul className="mr-4 flex h-[563px] flex-col border-y border-black bg-[#262626]">
        {tree.map((n, i) => (
          <li key={i} className={clsx('flex min-h-0 flex-1 items-center border-b border-[#202020]', n.indent, n.selected && 'bg-[#383838]')}>
            {n.kind !== 'item' && <Icon name="down" className="mr-1 size-3 text-[#9b9b9b]" />}
            {n.kind === 'folder' && <Icon name="folder" className="mr-2 -ml-1 size-[22px]" />}
            {n.badges?.map((b) => <Badge key={b} kind={b} />)}
            {n.selected ? (
              <span className="-ml-1 bg-[#9c9c9c] pr-2.5 pl-1 text-[17px] leading-[21px] text-black">{n.text}</span>
            ) : (
              <Mixed text={n.text} />
            )}
          </li>
        ))}
      </ul>
      <div className="mr-4 flex h-8 justify-end border-b-[3px] border-[#181818] pt-1 pr-2.5">
        <button aria-label="新建动画预设" className="h-[18px]"><Icon name="newBin" className="size-[18px]" /></button>
      </div>
      <PanelTab title="库" />
      <PanelTab title="段落" />
      <PanelTab title="字符" />
      <div className="absolute top-[365px] right-0 h-[90px] w-[15px] rounded-full border-2 border-[#8f8f8f] bg-linear-to-b from-[#181818] from-10% via-[#fb8238] via-10% to-[#ffc48a]" />
    </aside>
  );
}

const box = 'flex h-5 w-5 shrink-0 items-center justify-center bg-[#222]';

type Layer = { id: number; name: string; audio?: boolean; hidden?: boolean; selected?: boolean };

const layers: Layer[] = [
  { id: 1, name: '黑色 纯色 3', selected: true },
  { id: 2, name: '黑色 纯色 2', hidden: true },
  { id: 3, name: '叹剪辑版.mp3', audio: true },
];

function LayerRow({ l }: { l: Layer }) {
  return (
    <tr className={clsx('h-[30px] border-b border-[#252525]', l.selected ? 'bg-[#464646]' : 'bg-[#303030]')}>
      <td>
        <div className="flex items-center gap-0.5 pl-1.5">
          <span className={clsx('flex size-5 items-center justify-center', !l.audio && 'bg-[#222]', l.hidden && 'text-[#777]')}>
            {!l.audio && <Icon name="eye" className="size-4" />}
          </span>
          <span className="flex size-5 items-center justify-center">{l.audio && <Icon name="speaker" className="size-[18px]" />}</span>
          <span className={box}>{l.selected && <Icon name="dot" className="size-4" />}</span>
          <span className={clsx(box, 'ml-0.5')} />
        </div>
      </td>
      <td>
        <div className="flex items-center gap-2 pl-1.5">
          <button aria-label="展开图层"><Icon name="right" className="size-3" /></button>
          <span className={clsx('h-6 w-[23px]', l.audio ? 'bg-[#b3c7b4]' : 'bg-[#b83838]')} />
        </div>
      </td>
      <td className="pl-2.5 text-[17px] font-bold">{l.id}</td>
      <td>
        <div className="flex items-center pl-1 font-bold">
          {l.audio ? (
            <svg viewBox="0 0 24 26" className="h-[26px] w-6 overflow-visible">
              <path d="M1 1v24l18-12z" fill="#fff" stroke="#1fb595" strokeWidth="2" strokeLinejoin="round" />
              <path d="M13 22h3M18 23h2M22 22h2" stroke="#c8c8c8" strokeWidth="2" />
            </svg>
          ) : (
            <span className="h-6 w-6 bg-black" />
          )}
          <span className={clsx('ml-1 flex h-[27px] flex-1 items-center border-2 pt-1 pl-0.5', l.selected ? 'border-[#a0a0a0]' : 'border-transparent')}>
            <Mixed text={l.name} />
          </span>
        </div>
      </td>
      <td className="pl-1.5">
        {!l.audio && <Select label="模式" value="正常" className="h-[25px] w-[86px] text-[18px]" />}
      </td>
      <td className="pl-[3px]">{!l.audio && <span className={box} />}</td>
      <td className="pl-1">
        {l.hidden && <Select label="轨道遮罩" value="无" className="h-[25px] w-[81px] text-[18px]" />}
      </td>
      <td>
        <div className="flex items-center gap-[2px] pl-[7px]">
          <span className={box}><Icon name="shy" className="size-[18px]" /></span>
          <span className={clsx('size-5', !l.audio && 'bg-[#222]')} />
          <span className={clsx(box, 'mx-px')}><Icon name="slash" className="size-[18px]" /></span>
          <span className={clsx('flex size-5 items-center justify-center', !l.audio && 'bg-[#222]')}>{!l.audio && <Fx />}</span>
          <span className="mx-px size-5" />
          <span className={clsx('size-5', !l.audio && 'bg-[#222]')} />
          <span className="mx-px size-5 bg-[#222]" />
          <span className={clsx('size-5', !l.audio && 'bg-[#222]')} />
        </div>
      </td>
      <td>
        <div className="flex items-center gap-2 pl-[9px]">
          <Icon name="whip" className="size-[18px]" />
          <Select label="父级" value="无" className="h-[25px] w-[133px] text-[18px]" />
        </div>
      </td>
    </tr>
  );
}

function LayerTable() {
  const sep = 'border-l-2 border-[#1c1c1c]';
  return (
    <table className="w-full table-fixed border-collapse text-left">
      <colgroup>
        <col className="w-[101px]" />
        <col className="w-12" />
        <col className="w-[50px]" />
        <col className="w-[209px]" />
        <col className="w-[96px]" />
        <col className="w-7" />
        <col className="w-[91px]" />
        <col className="w-[205px]" />
        <col />
      </colgroup>
      <thead>
        <tr className="h-[29px] border-y border-black bg-[#323232] text-[20px] leading-5 font-normal text-[#a0a0a0]">
          <th>
            <div className="flex items-center gap-1.5 pl-2 text-[#b8b8b8]">
              <Icon name="eye" className="size-4" />
              <Icon name="speaker" className="size-[18px]" />
              <Icon name="dot" className="size-4" />
              <Icon name="lock" className="size-4" />
            </div>
          </th>
          <th><div className={clsx(sep, 'pl-5')}><Icon name="tag" className="size-[18px] text-[#b8b8b8]" /></div></th>
          <th><div className={clsx(sep, 'pl-2 text-[17px] font-normal')}>#</div></th>
          <th><div className={clsx(sep, 'pl-2 font-normal')}>源名称</div></th>
          <th><div className={clsx(sep, 'pl-2 font-normal')}>模式</div></th>
          <th><div className="pl-2.5 text-[17px] font-normal">T</div></th>
          <th><div className="pl-2 text-[17px] font-normal">TrkMat</div></th>
          <th>
            <div className={clsx(sep, 'flex items-center gap-[4px] pl-1.5 text-[#b8b8b8]')}>
              <Icon name="shy" className="size-[18px]" />
              <Icon name="sun" className="size-[18px]" />
              <Icon name="slashDots" className="size-[18px]" />
              <Fx className="w-5 font-normal" />
              <Icon name="film" className="size-[19px]" />
              <Icon name="blur" className="size-[19px]" />
              <Icon name="adjust" className="size-[18px]" />
              <Icon name="cube" className="size-[19px]" />
            </div>
          </th>
          <th><div className={clsx(sep, 'mr-6 border-r-2 pl-2 font-normal')}>父级和链接</div></th>
        </tr>
      </thead>
      <tbody>{layers.map((l) => <LayerRow key={l.id} l={l} />)}</tbody>
    </table>
  );
}

const marks = ['05s', '10s', '15s', '20s', '25s', '30s', '35s', '40s', '45s', '50s', '55s', '01:00s', '05s', '10s'];

function Tracks() {
  return (
    <div className="relative flex min-w-0 flex-1 flex-col border-l border-black">
      <div className="mt-3 mr-[26px] flex h-3">
        <span className="w-2.5 rounded-l-full bg-[#2d8ceb]" />
        <span className="mx-px flex-1 bg-[#666]" />
        <span className="w-2.5 rounded-r-full bg-[#2d8ceb]" />
      </div>
      <div className="mr-[37px] ml-[11px] flex h-8 border-t border-black pt-0.5 font-['Liberation_Mono',monospace] text-[14px] leading-5">
        <span className="-ml-2 w-2">:00s</span>
        <span className="w-[3.475%] shrink-0" />
        {marks.map((m, i) => (
          <span key={i} className="flex w-[6.95%] shrink-0 flex-col items-center">
            {m}
            <span className="h-2 w-px bg-[#777]" />
          </span>
        ))}
      </div>
      <div className="flex h-[22px] border-y border-black">
        <span className="w-2.5 rounded-l-lg bg-[#2d8ceb]" />
        <span className="mx-px flex-1 bg-[#5f5f5f]" />
        <span className="w-2.5 rounded-r-lg bg-[#2d8ceb]" />
        <Icon name="shield" className="mx-1 size-[18px]" />
      </div>
      <div className="h-[7px] border-b border-black" />
      <div className="flex flex-1">
        <div className="flex flex-1 flex-col">
          <div className="h-[30px] border-b border-[#252525] bg-[#464646] px-[10px] py-[3px]">
            <div className="h-[24px] border-t-2 border-l border-[#c58f87] bg-linear-to-b from-[#b4454a] to-[#9b4242]" />
          </div>
          <div className="h-[30px] border-b border-[#252525] bg-[#3a3a3a] px-[10px] py-[3px]">
            <div className="h-[24px] bg-[#7a3a3a]" />
          </div>
          <div className="h-[30px] bg-[#3c3c3c] px-[10px] py-[3px]">
            <div className="h-[24px] w-[24%] rounded-t-md border border-[#5e665f] bg-[#78837a]" />
          </div>
          <div className="mx-[11px] flex-1 bg-[#303030]" />
        </div>
        <div className="w-[26px] pt-0.5"><Icon name="compButton" className="size-[22px]" /></div>
      </div>
      <div className="flex h-7 items-center text-[#b8b8b8]">
        <Icon name="mountain" className="ml-2 size-3.5" />
        <input type="range" aria-label="缩放时间轴" defaultValue={0} className="ml-[18px] h-px w-[74px] appearance-none bg-[#5a5a5a] [&::-webkit-slider-thumb]:size-3.5 [&::-webkit-slider-thumb]:appearance-none [&::-webkit-slider-thumb]:rounded-full [&::-webkit-slider-thumb]:border-2 [&::-webkit-slider-thumb]:border-[#b8b8b8] [&::-webkit-slider-thumb]:bg-[#232323]" />
        <Icon name="mountain" className="ml-4 size-6" />
      </div>
      <div className="pointer-events-none absolute top-[34px] bottom-7 left-[13px] flex w-[19px] flex-col items-center">
        <svg viewBox="0 0 19 20" className="h-5 w-[19px] shrink-0"><path fill="#2d8ceb" d="M0 0h19v8l-7 12H7L0 8z" /><path stroke="#163f68" strokeWidth="1.500" d="M6 10h7M9.500 10v10" /></svg>
        <span className="w-0.5 flex-1 bg-[#2d8ceb]" />
      </div>
    </div>
  );
}

function CompTab({ name }: { name: string }) {
  return (
    <button className="flex w-[171px] items-center gap-[18px] text-[20px] text-[#808080]">
      <span className="size-[15px] bg-[#ab9774]" />
      {name}
    </button>
  );
}

function Timeline() {
  return (
    <section className="mr-0.5 ml-[3px] flex flex-1 flex-col bg-[#232323]">
      <div className="flex h-[57px] text-[20px]">
        <button className="mr-[84px] ml-10 text-[#808080]">渲染队列</button>
        <CompTab name="合成 1" />
        <CompTab name="合成 2" />
        <div className="-ml-[22px] flex items-center border-b-[3px] border-[#b8b8b8] pt-0.5">
          <button aria-label="关闭合成"><Icon name="close" className="size-[9px]" /></button>
          <span className="mr-[18px] ml-3 size-[15px] bg-[#ab9774]" />
          <span className="mr-4">地面</span>
          <TabMenu />
        </div>
      </div>
      <div className="flex flex-1">
        <div className="flex w-[1028px] shrink-0 flex-col">
          <div className="flex h-[55px] items-start">
            <div className="w-[183px] pt-2 text-center">
              <button className="block w-full pl-1 text-[20px] leading-6 font-medium text-[#2d8ceb]">0:00:00:14</button>
              <p className="pr-4 pl-4 font-['Liberation_Mono',monospace] text-[14px] leading-5 whitespace-nowrap text-[#24588f]">00014 (24.00 fps)</p>
            </div>
            <label className="mt-3.5 flex h-7 w-[543px] items-center rounded-sm border border-[#2c2c2c] bg-[#161616] pl-2.5">
              <Icon name="searchDrop" className="size-6" />
              <input aria-label="搜索图层" className="min-w-0 flex-1 bg-transparent outline-none" />
            </label>
            <div className="mt-3.5 flex h-7 items-center pl-[22px]">
              <button aria-label="合成微型流程图" className="mr-[26px]"><Icon name="flow" className="size-[26px]" /></button>
              <button aria-label="草图 3D" className="mr-[26px]"><Icon name="draft3d" /></button>
              <button aria-label="隐藏消隐图层" className="mr-4"><Icon name="shyBar" /></button>
              <button aria-label="帧混合" className="mr-4"><Icon name="film" className="size-[22px]" /></button>
              <button aria-label="运动模糊" className="mr-7"><Icon name="blur" className="size-[22px]" /></button>
              <button aria-label="图表编辑器"><Icon name="graph" /></button>
            </div>
          </div>
          <LayerTable />
          <div className="mt-auto flex h-7 items-center gap-2 pl-2.5 text-[#2d8ceb]">
            <button aria-label="图层开关"><Icon name="switches" className="size-[18px]" /></button>
            <button aria-label="转换控制"><Icon name="modes" className="size-5" /></button>
            <button aria-label="时间伸缩" className="text-[#b8b8b8]"><Icon name="stretch" className="size-[18px]" /></button>
          </div>
        </div>
        <Tracks />
      </div>
    </section>
  );
}

export default function App() {
  return (
    <div className="flex min-h-screen flex-col bg-[#161616] font-['Noto_Sans_CJK_SC',sans-serif] leading-normal text-[#b5b5b5]">
      <TitleBar />
      <Toolbar />
      <main className="flex flex-1 flex-col">
        <div className="mt-[3px] mb-1.5 flex gap-x-[5px]">
          <EffectControls />
          <div className="flex flex-1">
            <Viewer />
            <SidePanels />
          </div>
        </div>
        <Timeline />
      </main>
      <footer className="mt-px h-[11px] bg-[#e9edf8]" />
    </div>
  );
}
